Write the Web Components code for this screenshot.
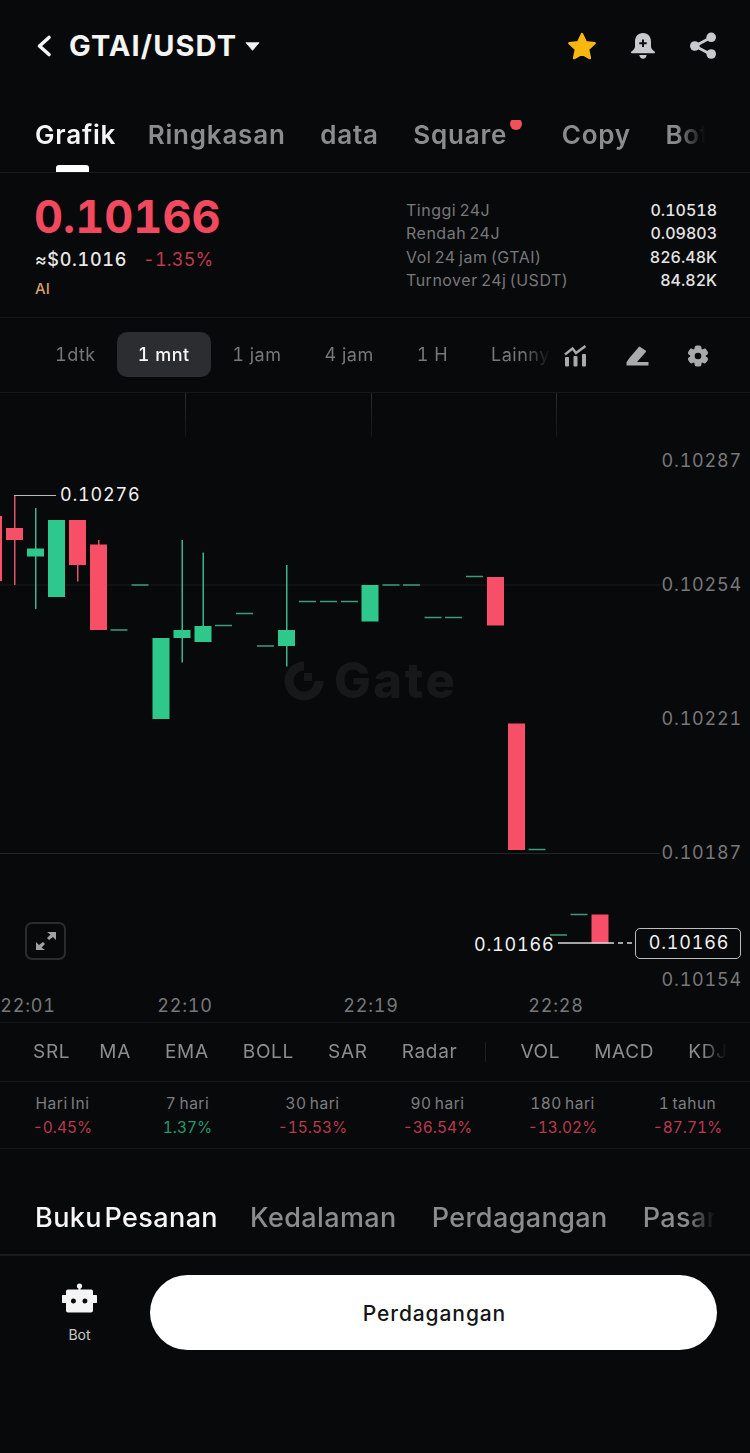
<!DOCTYPE html>
<html lang="id">
<head>
<meta charset="utf-8">
<title>GTAI/USDT</title>
<style>
  html, body { margin: 0; background: #08090a; }
  body { font-family: Inter, "Noto Sans", sans-serif; color: #fff; }
  gt-app { width: 750px; }
</style>
</head>
<body>
<gt-app>
  <gt-header title="GTAI/USDT"></gt-header>
  <gt-strip kind="main" fade="705">
    <gt-tab active>Grafik</gt-tab>
    <gt-tab>Ringkasan</gt-tab>
    <gt-tab>data</gt-tab>
    <gt-tab dot>Square</gt-tab>
    <gt-tab>Copy</gt-tab>
    <gt-tab>Bot</gt-tab>
  </gt-strip>
  <gt-ticker>
    <gt-stat label="Tinggi 24J" value="0.10518"></gt-stat>
    <gt-stat label="Rendah 24J" value="0.09803"></gt-stat>
    <gt-stat label="Vol 24 jam (GTAI)" value="826.48K"></gt-stat>
    <gt-stat label="Turnover 24j (USDT)" value="84.82K"></gt-stat>
  </gt-ticker>
  <gt-intervals></gt-intervals>
  <gt-chart></gt-chart>
  <gt-indicators></gt-indicators>
  <gt-periods>
    <gt-period label="Hari Ini" value="-0.45%"></gt-period>
    <gt-period label="7 hari" value="1.37%" up></gt-period>
    <gt-period label="30 hari" value="-15.53%"></gt-period>
    <gt-period label="90 hari" value="-36.54%"></gt-period>
    <gt-period label="180 hari" value="-13.02%"></gt-period>
    <gt-period label="1 tahun" value="-87.71%"></gt-period>
  </gt-periods>
  <gt-strip kind="book" fade="715">
    <gt-tab active>Buku Pesanan</gt-tab>
    <gt-tab>Kedalaman</gt-tab>
    <gt-tab>Perdagangan</gt-tab>
    <gt-tab>Pasar</gt-tab>
  </gt-strip>
  <gt-footer></gt-footer>
</gt-app>

<script>
class GtApp extends HTMLElement {
    constructor () {
        super();
        this.attachShadow({mode: 'open'});
        this.shadowRoot.innerHTML = `
            <style>:host { display: block; }</style>
            <slot></slot>`;
    }
}
customElements.define('gt-app', GtApp);

class GtHeader extends HTMLElement {
    constructor () {
        super();
        this.attachShadow({mode: 'open'});
        this.shadowRoot.innerHTML = `
            <style>
                :host { display: flex; align-items: center; height: 92px; box-sizing: border-box; padding: 0 33px 0 34px; }
                .title { font: 700 29px Inter, sans-serif; color: #f4f4f4; margin: 0 0 2px 16px; letter-spacing: 1.100px; }
                .caret { margin-left: 8px; }
                .icons { margin-left: auto; display: flex; align-items: center; gap: 33px; }
                svg { display: block; }
            </style>
            <svg width="19" height="24" viewBox="0 0 19 24"><path d="M15 3.500 5.500 12l9.500 8.500" fill="none" stroke="#f4f4f4" stroke-width="3.600" stroke-linecap="round" stroke-linejoin="round"/></svg>
            <span class="title">${this.getAttribute('title')}</span>
            <svg class="caret" width="15" height="9" viewBox="0 0 15 9"><path d="M1 .7h13L7.500 8.300z" fill="#f4f4f4" stroke="#f4f4f4" stroke-width=".8" stroke-linejoin="round"/></svg>
            <div class="icons">
                <svg width="30" height="28" viewBox="0 0 30 28"><path d="M15 2l3.800 8.100 8.900 1.100-6.600 6.100 1.800 8.800L15 21.700l-7.900 4.400 1.800-8.800-6.600-6.100 8.900-1.100z" fill="#f8b70e" stroke="#f8b70e" stroke-width="2.400" stroke-linejoin="round"/></svg>
                <svg width="26" height="28" viewBox="0 0 26 28"><path d="M13 1c5.200 0 8 3.700 8 8.500v5.300c0 1.500 1.200 2.800 3.500 4.700.9.800.5 1.800-.7 1.800H2.200c-1.200 0-1.600-1-.7-1.800C3.800 17.600 5 16.300 5 14.800V9.500C5 4.700 7.800 1 13 1z" fill="#c8cbce"/><path d="M9.300 23h7.400c-.3 2.300-1.800 3.800-3.700 3.800S9.600 25.300 9.300 23z" fill="#c8cbce"/><path d="M13 7.500v7.400M9.300 11.200h7.400" stroke="#0b0c0d" stroke-width="2"/></svg>
                <svg width="28" height="28" viewBox="0 0 28 28"><path d="M22 5.500 6 14l16 8.500" fill="none" stroke="#c8cbce" stroke-width="2.800"/><circle cx="22.200" cy="5.300" r="4.800" fill="#c8cbce"/><circle cx="5.800" cy="14" r="4.800" fill="#c8cbce"/><circle cx="22.200" cy="22" r="4.800" fill="#c8cbce"/></svg>
            </div>`;
    }
}
customElements.define('gt-header', GtHeader);

// text tab, used by both tab rows, size comes from the strip
class GtTab extends HTMLElement {
    constructor () {
        super();
        this.attachShadow({mode: 'open'});
        this.shadowRoot.innerHTML = `
            <style>
                :host { display: block; position: relative; flex: none; color: #8b8c8e; white-space: nowrap; }
                :host([active]) { color: #f6f6f6; margin-right: -3px; }
                i { display: none; position: absolute; right: -15px; top: -2px; width: 12px; height: 12px; border-radius: 50%; background: #f0505a; }
                :host([dot]) i { display: block; }
                :host([dot]) { margin-right: 20px; }
            </style>
            <slot></slot><i></i>`;
    }
}
customElements.define('gt-tab', GtTab);

class GtStrip extends HTMLElement {
    constructor () {
        super();
        this.attachShadow({mode: 'open'});
        const kind = this.getAttribute('kind');
        const end = Number(this.getAttribute('fade'));
        this.shadowRoot.innerHTML = `
            <style>
                :host { display: block; position: relative; border-bottom: 1px solid #1a1b1d; box-sizing: border-box; overflow: hidden; }
                :host([kind=main]) { height: 81px; padding: 28px 0 0 35px; font: 600 26px/30px Inter, sans-serif; letter-spacing: .8px; }
                :host([kind=book]) { height: 107px; padding: 53px 0 0 35px; font: 500 27px/32px Inter, sans-serif; letter-spacing: .4px; word-spacing: -5px; border-bottom-width: 2px; }
                .row {
                    display: flex; gap: ${kind === 'main' ? '34.500px' : '35px'};
                    width: ${end - 35}px; overflow: hidden;
                    -webkit-mask-image: linear-gradient(90deg, #000 calc(100% - 28px), transparent);
                    mask-image: linear-gradient(90deg, #000 calc(100% - 28px), transparent);
                }
                .bar { position: absolute; left: 56px; bottom: 0; width: 33px; height: 7px; border-radius: 3px 3px 0 0; background: #fff; display: ${kind === 'main' ? 'block' : 'none'}; }
            </style>
            <div class="row"><slot></slot></div>
            <div class="bar"></div>`;
    }
}
customElements.define('gt-strip', GtStrip);

class GtStat extends HTMLElement {
    constructor () {
        super();
        this.attachShadow({mode: 'open'});
        this.shadowRoot.innerHTML = `
            <style>
                :host { display: flex; justify-content: space-between; align-items: center; height: 23.500px; }
                .l { font: 400 16px Inter, sans-serif; color: #77787a; letter-spacing: .5px; word-spacing: -1.500px; }
                .v { font: 500 16px Inter, sans-serif; font-variant-numeric: tabular-nums; color: #e4e4e4; }
            </style>
            <span class="l">${this.getAttribute('label')}</span>
            <span class="v">${this.getAttribute('value')}</span>`;
    }
}
customElements.define('gt-stat', GtStat);

class GtTicker extends HTMLElement {
    constructor () {
        super();
        this.attachShadow({mode: 'open'});
        this.shadowRoot.innerHTML = `
            <style>
                :host { display: flex; justify-content: space-between; height: 145px; box-sizing: border-box; padding: 0 33px 0 35px; border-bottom: 1px solid #161719; }
                .price { font: 700 45px/44px Inter, sans-serif; font-variant-numeric: tabular-nums; color: #f2495f; margin: 22px 0 0 -1px; }
                .sub { display: flex; gap: 16px; margin-top: 8px; font: 500 18px/26px Inter, sans-serif; font-variant-numeric: tabular-nums; letter-spacing: .7px; color: #e8e8e8; }
                .sub b { font-weight: 400; letter-spacing: .2px; color: #bf3a4e; }
                .tag { font: 500 15px/18px Inter, sans-serif; color: #d9a066; margin-top: 7px; }
                .stats { width: 311px; padding-top: 25px; }
            </style>
            <div>
                <div class="price">0.10166</div>
                <div class="sub"><span>≈$0.1016</span><b>-1.35%</b></div>
                <div class="tag">AI</div>
            </div>
            <div class="stats"><slot></slot></div>`;
    }
}
customElements.define('gt-ticker', GtTicker);

class GtIntervals extends HTMLElement {
    constructor () {
        super();
        this.attachShadow({mode: 'open'});
        const items = ['1dtk', '1 mnt', '1 jam', '4 jam', '1 H', 'Lainnya'];
        this.shadowRoot.innerHTML = `
            <style>
                :host { display: flex; align-items: center; height: 75px; box-sizing: border-box; border-bottom: 1px solid #17181a; padding: 0 0 2px 33px; font: 400 18px Inter, sans-serif; font-variant-numeric: tabular-nums; letter-spacing: .5px; color: #77787a; }
                .list {
                    display: flex; width: 519px; overflow: hidden; white-space: nowrap;
                    -webkit-mask-image: linear-gradient(90deg, #000 calc(100% - 30px), transparent);
                    mask-image: linear-gradient(90deg, #000 calc(100% - 30px), transparent);
                }
                .list span { flex: none; height: 45px; line-height: 46px; padding: 0 21.500px; border-radius: 10px; }
                .list span:first-child { padding: 0 21px 0 22px; }
                .list span.on { background: #2b2d30; color: #f6f6f6; font-weight: 500; padding: 0 21px; }
                .icons { display: flex; align-items: center; margin: 3px 0 0 12px; gap: 38.500px; }
                svg { display: block; flex: none; }
            </style>
            <div class="list">${items.map((t, i) => `<span class="${i === 1 ? 'on' : ''}">${t}</span>`).join('')}</div>
            <div class="icons">
                <svg width="23" height="22" viewBox="0 0 23 22" fill="#a9aaab"><path d="M1 9.500 8.500 3.500 12 8 21.500 1" fill="none" stroke="#a9aaab" stroke-width="2.400"/><rect x="1" y="12" width="4" height="9.500" rx="1"/><rect x="9.500" y="11" width="4" height="10.500" rx="1"/><rect x="18" y="9" width="4" height="12.500" rx="1"/></svg>
                <svg width="23" height="20" viewBox="0 0 23 20" fill="#a9aaab"><path d="M.5 19.500v-3.200l2.500-3.800L12.800 1l.8-.5 6.300 4.300.1 1L11 16h11.500v3.500z"/></svg>
                <svg width="22" height="22" viewBox="0 0 22 22"><g fill="#a9aaab"><circle cx="11" cy="11" r="7.800"/><rect x="7.500" y=".5" width="7" height="21" rx="2.500"/><rect x="7.500" y=".5" width="7" height="21" rx="2.500" transform="rotate(60 11 11)"/><rect x="7.500" y=".5" width="7" height="21" rx="2.500" transform="rotate(120 11 11)"/></g><circle cx="11" cy="11" r="3.300" fill="#08090a"/></svg>
            </div>`;
    }
}
customElements.define('gt-intervals', GtIntervals);

// free canvas, coordinates below are page y, the chart box starts at TOP
const TOP = 393;
const UP = '#2ec78c';
const DOWN = '#f84f68';
const FLAT = '#3f9c7a';
// x, bodyTop, bodyBottom, color, wickTop, wickBottom
const CANDLES = [
    [-15, 516, 581, DOWN],
    [6, 528, 540, DOWN, 496, 585],
    [27, 548.5, 556.5, UP, 508, 609],
    [48, 520, 597, UP],
    [69, 520, 565, DOWN, 520, 581.500],
    [90, 544.500, 630, DOWN, 540, 630],
    [110.500, 630, 0, FLAT],
    [131.500, 585, 0, FLAT],
    [152.500, 638, 719, UP],
    [173.500, 630, 638, UP, 540, 662.500],
    [194.500, 626, 642, UP, 552.500, 642],
    [215, 625.500, 0, FLAT],
    [236, 613.500, 0, FLAT],
    [257, 646, 0, FLAT],
    [278, 630, 646, UP, 565, 666.500],
    [299, 601.500, 0, FLAT],
    [320, 601.500, 0, FLAT],
    [341, 601.500, 0, FLAT],
    [361.500, 585, 621.500, UP],
    [382.500, 585, 0, FLAT],
    [403, 585, 0, FLAT],
    [424.500, 617.500, 0, FLAT],
    [445, 617.500, 0, FLAT],
    [466, 576.500, 0, FLAT],
    [487, 577, 625.500, DOWN],
    [508, 723.500, 850, DOWN],
    [528.500, 849.500, 0, FLAT],
    [550, 935, 0, FLAT],
    [570.500, 914.500, 0, FLAT],
    [591.500, 914.500, 943.500, DOWN]
];

class GtChart extends HTMLElement {
    constructor () {
        super();
        this.attachShadow({mode: 'open'});

        let marks = '';
        CANDLES.forEach(([x, a, b, color, w1, w2]) => {
            if (w1) {
                marks += `<rect x="${x + 8}" y="${w1 - TOP}" width="1.500" height="${w2 - w1}" fill="${color === UP ? '#3fb58a' : '#d9566a'}"/>`;
            }
            if (b) {
                marks += `<rect x="${x}" y="${a - TOP}" width="17" height="${b - a}" fill="${color}"/>`;
            } else {
                marks += `<rect x="${x}" y="${a - TOP - .75}" width="17" height="1.500" fill="${color}"/>`;
            }
        });

        const axis = [['0.10287', 461], ['0.10254', 585], ['0.10221', 719], ['0.10187', 853], ['0.10154', 980]];
        const times = [['22:01', 28], ['22:10', 185], ['22:19', 371], ['22:28', 556]];

        this.shadowRoot.innerHTML = `
            <style>
                :host { display: block; position: relative; height: 629px; overflow: hidden; border-bottom: 1px solid #141517; font: 400 18px/20px Inter, sans-serif; font-variant-numeric: tabular-nums; letter-spacing: .8px; }
                svg { position: absolute; left: 0; top: 0; }
                .t { position: absolute; white-space: nowrap; height: 20px; }
                .axis { right: 8px; color: #77787a; }
                .time { transform: translateX(-50%); color: #77787a; top: 603px; }
                .white { color: #f2f2f2; }
                .box { position: absolute; left: 635px; top: 535px; width: 106px; height: 31px; box-sizing: border-box; border: 1.500px solid #bdbdbd; border-radius: 5px; background: #08090a; color: #f2f2f2; text-align: center; line-height: 28px; padding-left: 2px; }
                .expand { position: absolute; left: 25px; top: 529px; width: 41px; height: 38px; box-sizing: border-box; border: 2px solid #2a2c2e; border-radius: 7px; display: flex; align-items: center; justify-content: center; }
                .mark { position: absolute; left: 284px; top: 268px; display: flex; align-items: center; gap: 10px; color: #17181a; font: 800 49px/40px Inter, sans-serif; letter-spacing: 2.500px; }
                .mark svg { position: static; display: block; }
            </style>
            <div class="mark">
                <svg width="40" height="40" viewBox="0 0 40 40"><path d="M20 5a15 15 0 1 0 15 15" fill="none" stroke="#17181a" stroke-width="9"/><rect x="20" y="12" width="8" height="8" fill="#17181a"/></svg>
                <span>Gate</span>
            </div>
            <svg width="750" height="629" viewBox="0 0 750 629">
                <rect x="0" y="191.500" width="660" height="1" fill="#1a1b1c"/>
                <rect x="0" y="460" width="660" height="1" fill="#232526"/>
                <defs><linearGradient id="fadeLine" x1="0" y1="0" x2="0" y2="1"><stop offset="0" stop-color="#2c2d2f"/><stop offset="1" stop-color="#141516"/></linearGradient></defs>
                <rect x="185" y="0" width="1" height="44" fill="url(#fadeLine)"/>
                <rect x="371" y="0" width="1" height="44" fill="url(#fadeLine)"/>
                <rect x="556" y="0" width="1" height="44" fill="url(#fadeLine)"/>
                ${marks}
                <path d="M14.500 103V102.500H56" fill="none" stroke="#b9b9b9" stroke-width="1.200"/>
                <path d="M558 550H609" stroke="#d8d8d8" stroke-width="1.500"/>
                <path d="M609 550H635" stroke="#d8d8d8" stroke-width="1.500" stroke-dasharray="5 4"/>
            </svg>
            ${axis.map(([t, y]) => `<span class="t axis" style="top:${y - TOP - 10}px">${t}</span>`).join('')}
            ${times.map(([t, x]) => `<span class="t time" style="left:${x}px">${t}</span>`).join('')}
            <span class="t white" style="left:60px;top:92px">0.10276</span>
            <span class="t white" style="left:474px;top:542px">0.10166</span>
            <div class="box">0.10166</div>
            <div class="expand">
                <svg style="position:static" width="20" height="18" viewBox="0 0 20 18" fill="#a0a1a2"><path d="M11 0h9v8l-3-3-4 3-2-2 3.500-3.500z"/><path d="M9 18H0v-8l3 3 4-3 2 2-3.500 3.500z"/></svg>
            </div>`;
    }
}
customElements.define('gt-chart', GtChart);

class GtIndicators extends HTMLElement {
    constructor () {
        super();
        this.attachShadow({mode: 'open'});
        const first = ['SRL', 'MA', 'EMA', 'BOLL', 'SAR', 'Radar'];
        const second = ['VOL', 'MACD', 'KDJ'];
        const spans = (list) => list.map((t) => `<span>${t}</span>`).join('');
        this.shadowRoot.innerHTML = `
            <style>
                :host { display: block; height: 59px; box-sizing: border-box; border-bottom: 1px solid #17181a; font: 400 19px/58px Inter, sans-serif; letter-spacing: .7px; color: #8c8d8f; }
                .row {
                    display: flex; align-items: center; gap: 34px; height: 58px; width: 727px; box-sizing: border-box; padding-left: 33px; overflow: hidden; white-space: nowrap;
                    -webkit-mask-image: linear-gradient(90deg, #000 calc(100% - 24px), transparent);
                    mask-image: linear-gradient(90deg, #000 calc(100% - 24px), transparent);
                }
                span { flex: none; }
                span:first-child { margin-right: -5px; }
                i { flex: none; width: 1px; height: 20px; background: #1d1e20; margin: 0 0 0 -6px; }
            </style>
            <div class="row">${spans(first)}<i></i>${spans(second)}</div>`;
    }
}
customElements.define('gt-indicators', GtIndicators);

class GtPeriod extends HTMLElement {
    constructor () {
        super();
        this.attachShadow({mode: 'open'});
        const color = this.hasAttribute('up') ? '#1f9a6c' : '#b93a50';
        this.shadowRoot.innerHTML = `
            <style>
                :host { display: block; text-align: center; }
                div { font: 400 15.500px/24px Inter, sans-serif; font-variant-numeric: tabular-nums; letter-spacing: .5px; word-spacing: -1.500px; color: #7d7e80; }
                b { display: block; font: 400 15.500px/24px Inter, sans-serif; font-variant-numeric: tabular-nums; color: ${color}; }
            </style>
            <div>${this.getAttribute('label')}</div>
            <b>${this.getAttribute('value')}</b>`;
    }
}
customElements.define('gt-period', GtPeriod);

class GtPeriods extends HTMLElement {
    constructor () {
        super();
        this.attachShadow({mode: 'open'});
        this.shadowRoot.innerHTML = `
            <style>
                :host { display: grid; grid-template-columns: repeat(6, 125px); height: 67px; box-sizing: border-box; padding-top: 10px; border-bottom: 1px solid #17181a; }
            </style>
            <slot></slot>`;
    }
}
customElements.define('gt-periods', GtPeriods);

class GtFooter extends HTMLElement {
    constructor () {
        super();
        this.attachShadow({mode: 'open'});
        this.shadowRoot.innerHTML = `
            <style>
                :host { display: flex; align-items: flex-start; padding: 19px 33px 0 0; height: 200px; box-sizing: border-box; }
                .bot { width: 150px; margin-top: 8px; padding-left: 9px; box-sizing: border-box; display: flex; flex-direction: column; align-items: center; font: 400 14px/18px Inter, sans-serif; color: #c9c9c9; gap: 13px; }
                svg { display: block; }
                button { flex: 1; height: 75px; border: 0; border-radius: 38px; background: #fff; color: #141516; font: 500 21px Inter, sans-serif; letter-spacing: .9px; padding: 2px 0 0 2px; }
            </style>
            <div class="bot">
                <svg width="35" height="30" viewBox="0 0 35 30"><circle cx="17.500" cy="3" r="2.600" fill="#f4f4f4"/><rect x="16.500" y="3" width="2" height="5" fill="#f4f4f4"/><path fill-rule="evenodd" fill="#f4f4f4" d="M6 6.500h23c1.200 0 2 .9 2 2V12h3c.6 0 1 .4 1 1v6c0 .6-.4 1-1 1h-3v7.500c0 1.200-.8 2-2 2H6c-1.200 0-2-.8-2-2V20H1c-.6 0-1-.4-1-1v-6c0-.6.4-1 1-1h3V8.500c0-1.100.8-2 2-2zM11.500 15.500a2.500 2.500 0 1 0 0 5 2.500 2.500 0 0 0 0-5zm11.500 0a2.500 2.500 0 1 0 0 5 2.500 2.500 0 0 0 0-5z"/></svg>
                <span>Bot</span>
            </div>
            <button>Perdagangan</button>`;
    }
}
customElements.define('gt-footer', GtFooter);
</script>
</body>
</html>
